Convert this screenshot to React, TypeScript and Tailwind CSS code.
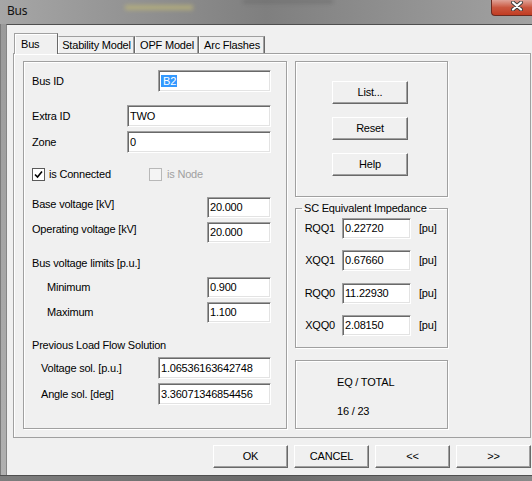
import type { ReactNode } from 'react'

const inputCls =
  'bg-white border border-t-[#a0a0a0] border-l-[#a0a0a0] border-b-white border-r-white shadow-[inset_1px_1px_0_#696969,inset_-1px_-1px_0_#e3e3e3] flex items-center pl-[2px] whitespace-nowrap overflow-hidden'

const btnCls =
  'bg-[#f0f0f0] border border-t-white border-l-white border-b-[#696969] border-r-[#696969] shadow-[inset_-1px_-1px_0_#a0a0a0] flex items-center justify-center'

const groupCls = 'border border-[#a0a0a0] shadow-[inset_1px_1px_0_#fff,1px_1px_0_#fff]'

function Field({ w, h = 'h-[22px]', children }: { w: string; h?: string; children: ReactNode }) {
  return <div className={`${inputCls} ${w} ${h} ml-auto`}>{children}</div>
}

function CheckBox({ checked, disabled }: { checked?: boolean; disabled?: boolean }) {
  return (
    <div
      className={`w-[13px] h-[13px] border flex items-center justify-center ${
        disabled ? 'border-[#b8b8b8] bg-[#f4f4f4]' : 'border-[#5a5a5a] bg-white'
      }`}
    >
      {checked && (
        <svg width="9" height="9" viewBox="0 0 9 9">
          <path d="M1 4.5 L3.5 7 L8 1.5" fill="none" stroke="#000" strokeWidth="1.6" />
        </svg>
      )}
    </div>
  )
}

function TitleBar() {
  return (
    <div className="h-[24px] flex items-start bg-gradient-to-r from-[#a6a6a6] via-[#7f7f7f] to-[#a2a2a2]">
      <div className="w-[125px] pl-[7px] pt-[3px] font-['Noto_Sans',sans-serif] text-[12px] leading-[16px] text-[#111]">
        Bus
      </div>
      <div className="w-[68px] h-[5px] mt-[5px] bg-[#b9b27a] blur-[2px] opacity-80" />
      <div className="w-[90px] h-[3px] ml-[50px] bg-[#666] blur-[2px] opacity-70" />
      <div className="ml-auto w-[41px] h-[16px] rounded-bl-[4px] border-l border-b border-[#6b2a20] bg-gradient-to-b from-[#dfa298] via-[#c9563f] to-[#c23c22] pl-[19px] pt-[1px]">
        <svg width="12" height="10" viewBox="0 0 12 10">
          <path d="M2 1.5 L10 8.5 M10 1.5 L2 8.5" stroke="#3a3a3a" strokeWidth="4" strokeLinecap="round" />
          <path d="M2 1.5 L10 8.5 M10 1.5 L2 8.5" stroke="#fff" strokeWidth="2.2" strokeLinecap="round" />
        </svg>
      </div>
    </div>
  )
}

function Tabs() {
  const others = [
    { label: 'Stability Model', w: 'w-[77px]' },
    { label: 'OPF Model', w: 'w-[64px]' },
    { label: 'Arc Flashes', w: 'w-[66px]' },
  ]
  return (
    <div className="h-[20px] flex items-end pl-[1px]">
      <div className="relative z-10 -mb-[1px] w-[44px] h-[21px] bg-[#f0f0f0] border-t border-l border-r border-t-[#a0a0a0] border-l-[#a0a0a0] border-r-[#696969] shadow-[inset_1px_1px_0_#fff] pl-[6px] pt-[3px] leading-[14px]">
        Bus
      </div>
      {others.map((t) => (
        <div
          key={t.label}
          className={`${t.w} h-[17px] bg-[#f0f0f0] border-t border-l border-r border-t-[#a0a0a0] border-l-white border-r-[#696969] shadow-[inset_-1px_0_0_#a0a0a0] flex items-center justify-center leading-[14px] whitespace-nowrap`}
        >
          {t.label}
        </div>
      ))}
    </div>
  )
}

function LeftGroup() {
  return (
    <div className={`${groupCls} w-[264px] h-[368px] flex flex-col pl-[8px] pr-[15px]`}>
      <div className="mt-[8px] h-[22px] flex items-center">
        <span>Bus ID</span>
        <Field w="w-[113px]">
          <span className="bg-[#3399ff] text-white pl-[2px] pr-[1px] leading-[12px]">B2</span>
        </Field>
      </div>
      <div className="mt-[13px] h-[22px] flex items-center">
        <span>Extra ID</span>
        <Field w="w-[144px]">TWO</Field>
      </div>
      <div className="mt-[4px] h-[22px] flex items-center">
        <span>Zone</span>
        <Field w="w-[144px]">0</Field>
      </div>
      <div className="mt-[14px] h-[15px] flex items-center">
        <div className="w-[117px] flex items-center">
          <CheckBox checked />
          <span className="ml-[4px]">is Connected</span>
        </div>
        <CheckBox disabled />
        <span className="ml-[5px] text-[#a0a0a0]">is Node</span>
      </div>
      <div className="mt-[15px] h-[21px] flex items-start">
        <span className="leading-[14px]">Base voltage [kV]</span>
        <Field w="w-[64px]" h="h-[21px]">20.000</Field>
      </div>
      <div className="mt-[4px] h-[21px] flex items-start">
        <span className="leading-[14px]">Operating voltage [kV]</span>
        <Field w="w-[64px]" h="h-[21px]">20.000</Field>
      </div>
      <div className="mt-[13px] h-[14px] leading-[14px]">Bus voltage limits [p.u.]</div>
      <div className="mt-[7px] h-[21px] flex items-center">
        <span className="ml-[15px]">Minimum</span>
        <Field w="w-[64px]" h="h-[21px]">0.900</Field>
      </div>
      <div className="mt-[4px] h-[21px] flex items-center">
        <span className="ml-[15px]">Maximum</span>
        <Field w="w-[64px]" h="h-[21px]">1.100</Field>
      </div>
      <div className="mt-[15px] h-[14px] leading-[14px]">Previous Load Flow Solution</div>
      <div className="mt-[5px] h-[22px] flex items-center">
        <span className="ml-[9px]">Voltage sol. [p.u.]</span>
        <Field w="w-[113px]">1.06536163642748</Field>
      </div>
      <div className="mt-[4px] h-[22px] flex items-center">
        <span className="ml-[9px]">Angle sol. [deg]</span>
        <Field w="w-[113px]">3.36071346854456</Field>
      </div>
    </div>
  )
}

const impedances = [
  { label: 'RQQ1', value: '0.22720', mt: 'mt-[3px]' },
  { label: 'XQQ1', value: '0.67660', mt: 'mt-[11px]' },
  { label: 'RQQ0', value: '11.22930', mt: 'mt-[12px]' },
  { label: 'XQQ0', value: '2.08150', mt: 'mt-[11px]' },
]

function RightColumn() {
  return (
    <div className="w-[153px] flex flex-col">
      <div className={`${groupCls} h-[136px] flex flex-col items-start pl-[36px] pt-[19px] gap-[13px]`}>
        {['List...', 'Reset', 'Help'].map((b) => (
          <button key={b} className={`${btnCls} w-[76px] h-[23px]`}>
            {b}
          </button>
        ))}
      </div>
      <fieldset className={`${groupCls} mt-[4px] h-[147px] flex flex-col`}>
        <legend className="ml-[6px] px-[2px] leading-[14px]">SC Equivalent Impedance</legend>
        {impedances.map((r) => (
          <div key={r.label} className={`${r.mt} h-[21px] flex items-center`}>
            <span className="w-[39px] text-right">{r.label}</span>
            <div className={`${inputCls} ml-[7px] w-[69px] h-[21px]`}>{r.value}</div>
            <span className="ml-[8px]">[pu]</span>
          </div>
        ))}
      </fieldset>
      <div className={`${groupCls} mt-[12px] h-[69px] flex flex-col pl-[41px] pt-[14px] leading-[14px]`}>
        <span>EQ / TOTAL</span>
        <span className="mt-[15px]">16 / 23</span>
      </div>
    </div>
  )
}

export default function App() {
  return (
    <div className="w-[532px] h-[481px] overflow-hidden flex flex-col bg-[#9d9d9d] font-['Liberation_Sans',Arial,sans-serif] text-[11px] tracking-[-0.2px] text-black">
      <TitleBar />
      <div className="flex flex-1 min-h-0">
        <div className="w-[6px] bg-gradient-to-b from-[#9a9a9a] to-[#b0b0b0] border-l border-[#7a7a7a]" />
        <div className="flex-1 bg-[#f0f0f0] border-t border-l border-t-[#4f4f4f] border-l-[#858585] flex flex-col pl-[6px] pr-[1px] pt-[8px]">
          <Tabs />
          <div className="w-[518px] h-[385px] border border-[#a0a0a0] shadow-[inset_1px_1px_0_#fff] flex gap-[8px] pl-[9px] pt-[7px]">
            <LeftGroup />
            <RightColumn />
          </div>
          <div className="mt-[7px] flex justify-end gap-[6px]">
            {['OK', 'CANCEL', '<<', '>>'].map((b) => (
              <button key={b} className={`${btnCls} w-[75px] h-[23px]`}>
                {b}
              </button>
            ))}
          </div>
        </div>
      </div>
      <div className="h-[6px] border-t border-[#4f4f4f] bg-gradient-to-r from-[#7d7d7d] via-[#6a6a6a] to-[#8a8a8a]" />
    </div>
  )
}
